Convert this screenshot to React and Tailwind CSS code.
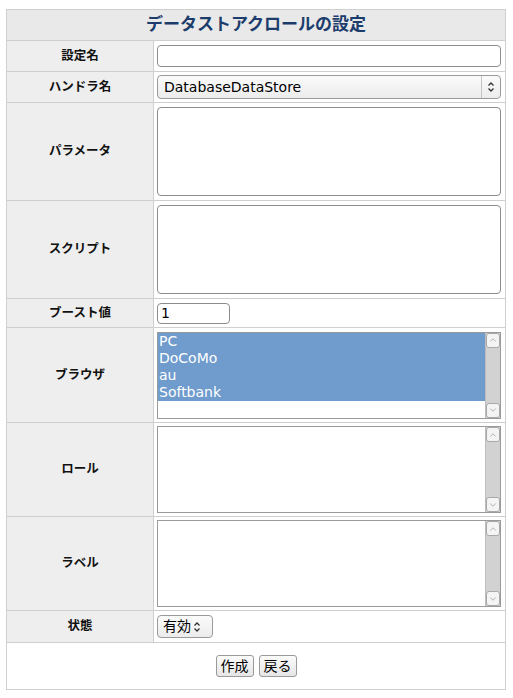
import { ChevronUp, ChevronDown } from 'lucide-react'

const jp = { fontFamily: '"DejaVu Sans", "Noto Sans CJK JP", sans-serif' }

const UpDown = () => (
	<svg width="8" height="12" viewBox="0 0 8 12" fill="none" stroke="#333" strokeWidth="1.3">
		<path d="M1.5 4.5 L4 2 L6.5 4.5" />
		<path d="M1.5 7.5 L4 10 L6.5 7.5" />
	</svg>
)

const ListBox = ({ items = [], selected = [] }) => (
	<div className="flex h-[87px] w-[344px] border border-[#9a9a9a] bg-white">
		<div className="flex-1 text-[14px] leading-[17px]">
			{items.map(item => (
				<div
					key={item}
					className={`pl-[1px] ${selected.includes(item) ? 'bg-[#6f9bcd] text-white' : 'text-black'}`}
				>
					{item}
				</div>
			))}
		</div>
		<div className="flex w-[15px] flex-col bg-[#d2d2d2] border-l border-[#bdbdbd]">
			<div className="flex h-[15px] items-center justify-center rounded-[3px] border border-[#a8a8a8] bg-[#f4f4f4]">
				<ChevronUp size={10} strokeWidth={1.5} color="#888" />
			</div>
			<div className="flex-1" />
			<div className="flex h-[15px] items-center justify-center rounded-[3px] border border-[#a8a8a8] bg-[#f4f4f4]">
				<ChevronDown size={10} strokeWidth={1.5} color="#888" />
			</div>
		</div>
	</div>
)

const Row = ({ label, height, children }) => (
	<tr style={{ height }}>
		<th className="w-[147px] border border-[#cfcfcf] bg-[#eeeeee] text-center text-[12.5px] font-bold text-[#111]">
			{label}
		</th>
		<td className="border border-[#cfcfcf] bg-white px-[3px] align-middle">{children}</td>
	</tr>
)

const btn =
	'h-[22px] rounded-[3px] border border-[#9a9a9a] bg-gradient-to-b from-[#fbfbfb] to-[#e6e6e6] px-[4px] text-[14px] text-black'

export default function App() {
	return (
		<div className="min-h-[698px] bg-white pl-[6px] pt-[9px]" style={jp}>
			<table className="w-[500px] border-collapse border border-[#cfcfcf]">
				<tbody>
					<tr className="h-[31px]">
						<th
							colSpan={2}
							className="border border-[#cfcfcf] bg-[#e9e9e9] text-center text-[17px] font-bold text-[#1c3c6c]"
						>
							データストアクロールの設定
						</th>
					</tr>
					<Row label="設定名" height={31}>
						<input
							type="text"
							className="block h-[22px] w-[344px] rounded-[4px] border border-[#8c8c8c] bg-white px-1 text-[14px]"
						/>
					</Row>
					<Row label="ハンドラ名" height={31}>
						<div className="flex h-[24px] w-[344px] items-center rounded-[4px] border border-[#9a9a9a] bg-gradient-to-b from-[#fbfbfb] to-[#ececec] text-[14px] text-black">
							<span className="flex-1 pl-[6px]">DatabaseDataStore</span>
							<span className="flex h-full w-[19px] items-center justify-center border-l border-[#c4c4c4]">
								<UpDown />
							</span>
						</div>
					</Row>
					<Row label="パラメータ" height={98}>
						<textarea className="block h-[89px] w-[344px] resize-none rounded-[4px] border border-[#8c8c8c] bg-white" />
					</Row>
					<Row label="スクリプト" height={98}>
						<textarea className="block h-[89px] w-[344px] resize-none rounded-[4px] border border-[#8c8c8c] bg-white" />
					</Row>
					<Row label="ブースト値" height={29}>
						<input
							type="text"
							defaultValue="1"
							className="block h-[21px] w-[73px] rounded-[4px] border border-[#8c8c8c] bg-white px-[3px] text-[14px] text-black"
						/>
					</Row>
					<Row label="ブラウザ" height={95}>
						<ListBox items={['PC', 'DoCoMo', 'au', 'Softbank']} selected={['PC', 'DoCoMo', 'au', 'Softbank']} />
					</Row>
					<Row label="ロール" height={94}>
						<ListBox />
					</Row>
					<Row label="ラベル" height={94}>
						<ListBox />
					</Row>
					<Row label="状態" height={32}>
						<div className="flex h-[23px] w-[56px] items-center rounded-[4px] border border-[#9a9a9a] bg-gradient-to-b from-[#fbfbfb] to-[#ececec] text-[14px] text-black">
							<span className="pl-[5px]">有効</span>
							<span className="ml-[2px] flex items-center">
								<UpDown />
							</span>
						</div>
					</Row>
					<tr className="h-[47px]">
						<td colSpan={2} className="border border-[#cfcfcf] bg-white text-center align-middle">
							<div className="flex justify-center gap-[5px]">
								<button className={btn}>作成</button>
								<button className={btn}>戻る</button>
							</div>
						</td>
					</tr>
				</tbody>
			</table>
		</div>
	)
}
